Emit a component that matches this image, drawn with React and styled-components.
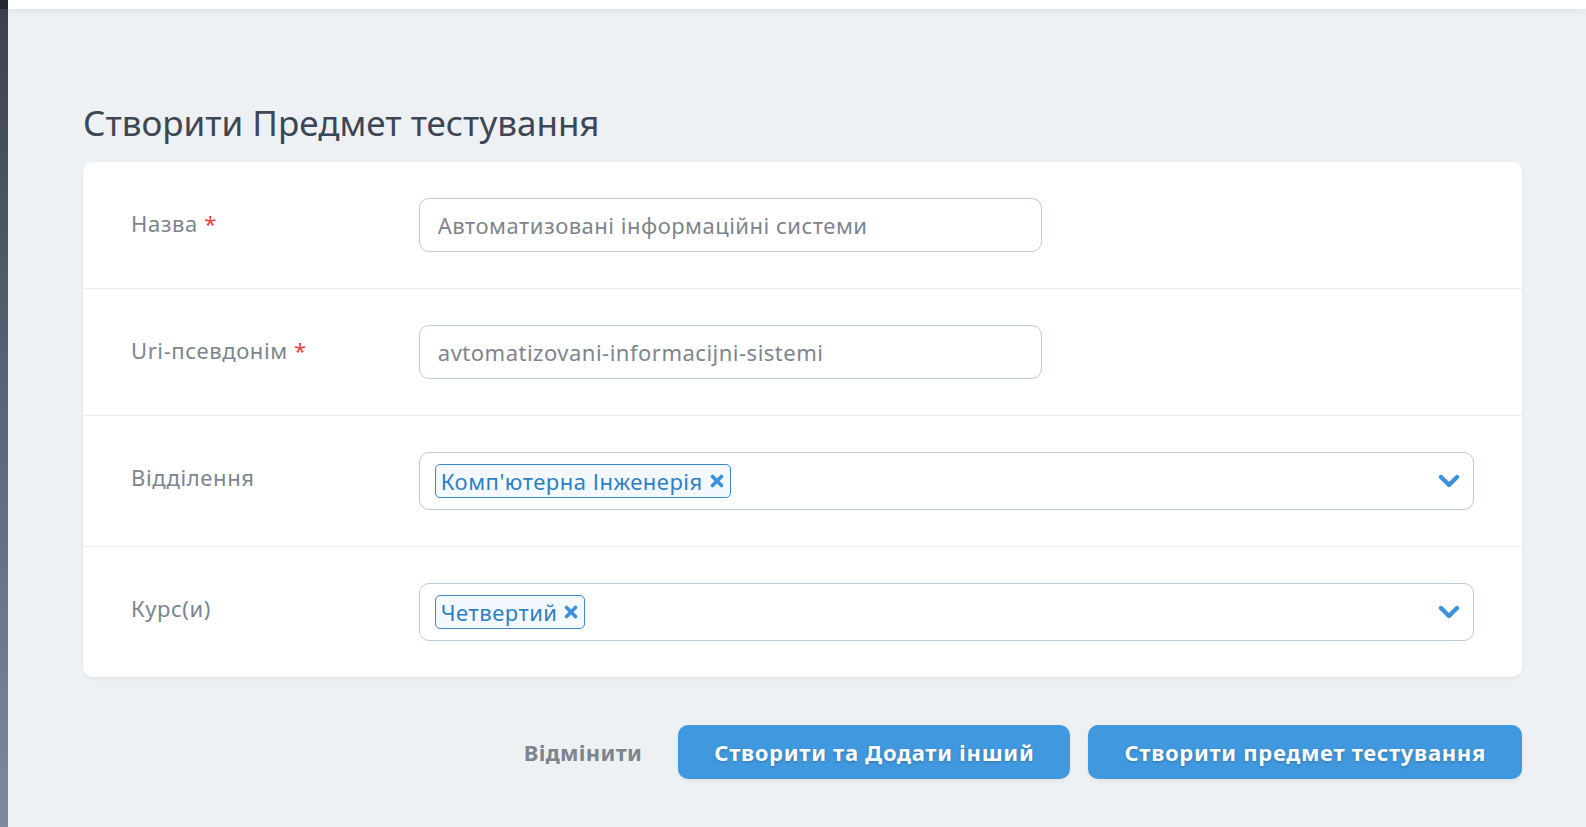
import React from 'react'
import styled, { createGlobalStyle } from 'styled-components'

const GlobalStyle = createGlobalStyle`
    html, body {
        margin: 0;
        padding: 0;
        background: #eef1f4;
        font-family: "Noto Sans", "Open Sans", sans-serif;
    }
    * { box-sizing: border-box; }
`

function ChevronDown() {
    return (
        <svg width="22" height="14" viewBox="0 0 22 14">
            <path d="M3 3 L11 11 L19 3" fill="none" stroke="#3d91d9" strokeWidth="4.4" strokeLinecap="round" strokeLinejoin="round" />
        </svg>
    )
}

function CrossIcon() {
    return (
        <svg width="14" height="14" viewBox="0 0 14 14">
            <path d="M2.5 2.5 L11.5 11.5 M11.5 2.5 L2.5 11.5" fill="none" stroke="#3d91db" strokeWidth="3.6" strokeLinecap="round" />
        </svg>
    )
}

function TextField({ label, required, value }) {
    return (
        <FieldRow>
            <LabelCell>
                <Label>{label}{required && <Required> *</Required>}</Label>
            </LabelCell>
            <ControlCell wide={false}>
                <TextInput readOnly value={value} />
            </ControlCell>
        </FieldRow>
    )
}

function TagField({ label, tags }) {
    return (
        <FieldRow>
            <LabelCell>
                <Label>{label}</Label>
            </LabelCell>
            <ControlCell wide>
                <MultiSelect>
                    <Tags>
                        {tags.map(t => (
                            <Tag key={t}>
                                {t}
                                <CrossIcon />
                            </Tag>
                        ))}
                    </Tags>
                    <ChevronDown />
                </MultiSelect>
            </ControlCell>
        </FieldRow>
    )
}

export default function App() {
    return (
        <Layout>
            <GlobalStyle />
            <SidebarEdge />
            <Main>
                <TopBar />
                <Content>
                    <Heading>Створити Предмет тестування</Heading>
                    <Card>
                        <TextField label="Назва" required value="Автоматизовані інформаційні системи" />
                        <TextField label="Uri-псевдонім" required value="avtomatizovani-informacijni-sistemi" />
                        <TagField label="Відділення" tags={["Комп'ютерна Інженерія"]} />
                        <TagField label="Курс(и)" tags={['Четвертий']} />
                    </Card>
                    <Actions>
                        <CancelLink>Відмінити</CancelLink>
                        <PrimaryButton>Створити та Додати інший</PrimaryButton>
                        <PrimaryButton>Створити предмет тестування</PrimaryButton>
                    </Actions>
                </Content>
            </Main>
        </Layout>
    )
}

const Layout = styled.div`
    display: flex;
    min-height: 100vh;
`
const SidebarEdge = styled.div`
    width: 8px;
    flex-shrink: 0;
    background: linear-gradient(180deg, #3a4250 0%, #7d8a9b 100%);
    border-top: 9px solid #252a31;
`
const Main = styled.div`
    flex: 1;
    display: flex;
    flex-direction: column;
`
const TopBar = styled.div`
    height: 9px;
    background: #fff;
    box-shadow: 0 2px 8px rgba(0, 0, 0, 0.07);
`
const Content = styled.div`
    padding: 0 64px 40px 75px;
`
const Heading = styled.h1`
    margin: 91px 0 17px;
    font-size: 35px;
    line-height: 45px;
    font-weight: 400;
    color: #3c4655;
`
const Card = styled.div`
    background: #fff;
    border-radius: 10px;
    box-shadow: 0 2px 4px rgba(0, 0, 0, 0.05);
`
const FieldRow = styled.div`
    display: flex;
    border-bottom: 1px solid #eaeef1;
    &:last-child { border-bottom: 0; }
`
const LabelCell = styled.div`
    width: 20%;
    padding: 36px 48px;
`
const Label = styled.label`
    display: block;
    padding-top: 12px;
    font-size: 22px;
    letter-spacing: 0.6px;
    line-height: 26px;
    color: #7c858e;
`
const Required = styled.span`
    color: #e74444;
`
const ControlCell = styled.div`
    width: ${p => (p.wide ? '80%' : '50%')};
    padding: 36px 48px;
`
const TextInput = styled.input`
    width: 100%;
    height: 54px;
    padding: 0 18px;
    border: 1px solid #bacad6;
    border-radius: 10px;
    font-family: inherit;
    font-size: 22px;
    letter-spacing: 0.5px;
    color: #7c858e;
    background: #fff;
    outline: none;
`
const MultiSelect = styled.div`
    height: 58px;
    display: flex;
    align-items: center;
    justify-content: space-between;
    padding: 0 13px 0 15px;
    border: 1px solid #bacad6;
    border-radius: 10px;
`
const Tags = styled.div`
    display: flex;
    gap: 8px;
`
const Tag = styled.span`
    display: inline-flex;
    align-items: center;
    gap: 7px;
    height: 34px;
    padding: 0 6px 0 5px;
    border: 1px solid #3a87cc;
    border-radius: 5px;
    background: #f3f9fe;
    color: #2f7fc3;
    font-size: 22px;
    letter-spacing: 0.5px;
`
const Actions = styled.div`
    display: flex;
    justify-content: flex-end;
    align-items: center;
    margin-top: 48px;
`
const CancelLink = styled.a`
    margin-right: 36px;
    font-size: 22px;
    letter-spacing: 0.3px;
    font-weight: 700;
    color: #7c858e;
    cursor: pointer;
`
const PrimaryButton = styled.button`
    height: 54px;
    padding: 0 36px;
    margin-left: 18px;
    border: 0;
    border-radius: 10px;
    background: #4099de;
    color: #fff;
    font-family: inherit;
    font-size: 22px;
    letter-spacing: 0.7px;
    font-weight: 700;
    text-shadow: 0 1px 3px rgba(0, 0, 0, 0.25);
    box-shadow: 0 2px 4px rgba(0, 0, 0, 0.06);
    cursor: pointer;
    &:first-of-type { margin-left: 0; }
`
